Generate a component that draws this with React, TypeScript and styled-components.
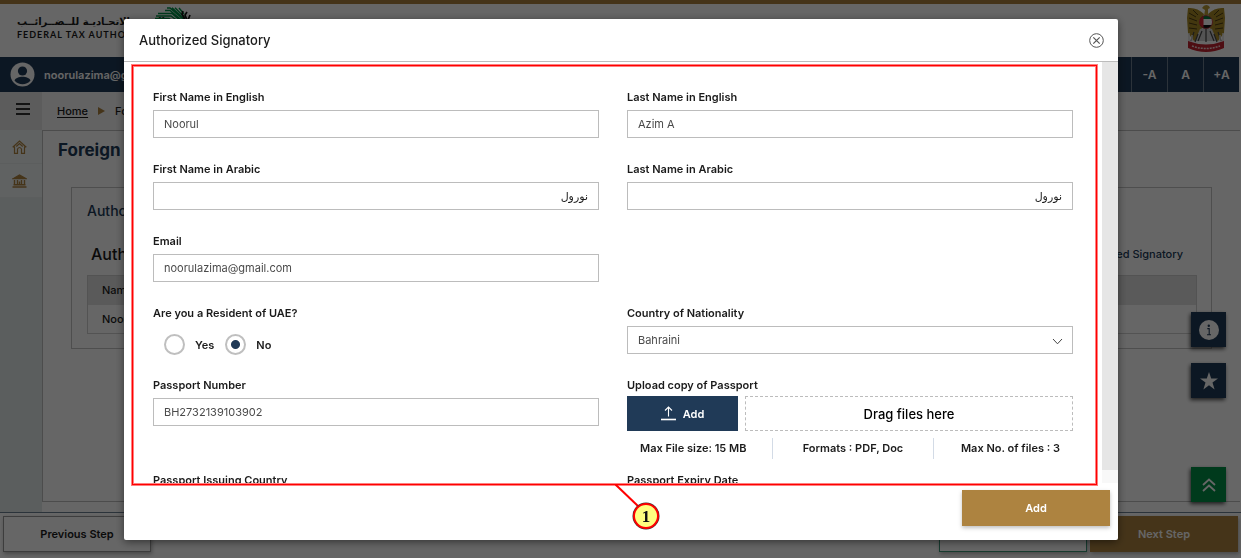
import React from "react";
import styled, { createGlobalStyle } from "styled-components";

const navy = "#203a57";
const gold = "#ad8340";
const sans = `Inter, "Noto Sans", "DejaVu Sans", sans-serif`;

const GlobalStyle = createGlobalStyle`
  *, *::before, *::after { box-sizing: border-box; }
  body { margin: 0; background: #fff; color: #1b1b1b; font: 500 11px/16px ${sans}; }
  button, input, select { font: inherit; color: inherit; margin: 0; }
  h1, h2, h3, p { margin: 0; }
`;

/* ---------- Page behind the dialog ---------- */

const Page = styled.div`
  min-height: 100vh;
  display: flex;
  flex-direction: column;
  border-top: 4px solid ${gold};
`;

const Masthead = styled.header`
  height: 53px;
  display: flex;
  justify-content: space-between;
  padding: 0 16px 0 17px;
`;

const Brand = styled.div`
  display: flex;
  padding-top: 3px;
`;

const BrandText = styled.div`
  width: 138px;
  padding-top: 8px;
`;

const BrandArabic = styled.p`
  width: max-content;
  direction: rtl;
  font: 700 10px/14px "DejaVu Sans", sans-serif;
  white-space: nowrap;
`;

const BrandEnglish = styled.p`
  font: 700 9px/12px Lato, sans-serif;
  letter-spacing: 1px;
  white-space: nowrap;
`;

const AccountBar = styled.div`
  height: 35px;
  display: flex;
  align-items: stretch;
  justify-content: space-between;
  margin-right: 2px;
  background: ${navy};
  color: #fff;
  font-weight: 600;
`;

const Account = styled.div`
  display: flex;
  align-items: center;
  gap: 9px;
  padding-left: 10px;
`;

const TextSizes = styled.div`
  display: flex;
`;

const TextSizeButton = styled.button`
  width: 36px;
  padding: 0;
  border: 0;
  border-left: 1px solid #6f8192;
  background: none;
  font-size: 12px;
`;

const Crumbs = styled.nav`
  height: 38px;
  display: flex;
  align-items: center;
  background: #f7f7f7;
`;

const MenuButton = styled.button`
  width: 42px;
  height: 38px;
  padding: 0 0 0 4px;
  border: 0;
  background: #e6e6e6;
`;

const CrumbList = styled.div`
  display: flex;
  align-items: center;
  gap: 10px;
  padding-left: 15px;
`;

const CrumbLink = styled.a`
  color: inherit;
  text-underline-offset: 2px;
`;

const Workspace = styled.div`
  flex: 1;
  display: flex;
`;

const SideNav = styled.nav`
  width: 42px;
  background: #e4eaea;
`;

const SideLink = styled.a`
  height: 34px;
  display: flex;
  align-items: center;
  justify-content: center;
  padding-right: 4px;
  border-bottom: 1px solid #e6eaea;
  background: #f1f5f5;
`;

const Main = styled.main`
  flex: 1;
  margin: 0 1px 10px 0;
  padding: 9px 28px 0 15px;
  border: 1px solid #bdbdbd;
  border-width: 1px 0 1px 1px;
`;

const PageTitle = styled.h1`
  font: 700 17px/20px ${sans};
  color: ${navy};
`;

const Card = styled.section`
  margin: 27px 0 0 13px;
  padding: 14px 14px 14px 15px;
  border: 1px solid #c4c4c4;
`;

const CardTitle = styled.h2`
  font: 500 14px/18px ${sans};
  color: ${navy};
`;

const CardHead = styled.div`
  display: flex;
  align-items: center;
  justify-content: space-between;
  padding: 24px 14px 11px 4px;
`;

const CardHeading = styled.h3`
  font: 500 16px/20px ${sans};
`;

const CardLink = styled.a`
  color: ${navy};
  text-decoration: none;
`;

const Signatories = styled.table`
  width: 100%;
  border: 1px solid #d0d0d0;
  border-collapse: collapse;
  text-align: left;
  th, td { height: 29px; padding: 0 14px; font-weight: 500; }
  th { background: #e0e0e0; }
`;

const StepBar = styled.footer`
  display: flex;
  justify-content: space-between;
  padding: 3px 3px 6px;
  border-top: 1px solid #6d8192;
`;

const StepGroup = styled.div`
  display: flex;
  gap: 3px;
`;

const StepButton = styled.button<{ $kind?: "save" | "next" }>`
  width: 148px;
  height: 36px;
  padding: 0;
  border: 1px solid ${(p) => (p.$kind === "save" ? "#3a9477" : p.$kind === "next" ? gold : "#9a9a9a")};
  background: ${(p) => (p.$kind === "next" ? gold : "#fff")};
  color: ${(p) => (p.$kind === "next" ? "#fff" : "inherit")};
  box-shadow: 1px 2px 4px rgba(0, 0, 0, 0.3);
  font-weight: 600;
`;

const Floating = styled.div`
  position: fixed;
  right: 15px;
  top: 312px;
  bottom: 56px;
  display: flex;
  flex-direction: column;
  gap: 16px;
`;

const FloatButton = styled.button<{ $up?: boolean }>`
  width: 35px;
  height: 35px;
  display: grid;
  place-items: center;
  padding: 0;
  border: 0;
  margin-top: ${(p) => (p.$up ? "auto" : "0")};
  background: ${(p) => (p.$up ? "#009247" : navy)};
  box-shadow: -1px 2px 4px rgba(0, 0, 0, 0.7);
`;

/* ---------- Dialog ---------- */

const Backdrop = styled.div`
  position: fixed;
  inset: 0;
  display: flex;
  padding: 19px 123px 18px 124px;
  background: rgba(0, 0, 0, 0.6);
`;

const Dialog = styled.div`
  flex: 1;
  min-width: 0;
  display: flex;
  flex-direction: column;
  border-radius: 2px;
  background: #fff;
  box-shadow: 0 2px 8px rgba(0, 0, 0, 0.5);
`;

const DialogHead = styled.header`
  height: 43px;
  display: flex;
  align-items: center;
  justify-content: space-between;
  padding: 0 14px 0 15px;
  border-bottom: 1px solid #bcbcbc;
`;

const DialogTitle = styled.h2`
  font: 500 13px/18px ${sans};
`;

const CloseButton = styled.button`
  display: flex;
  padding: 0;
  border: 0;
  background: none;
`;

const DialogBody = styled.div`
  position: relative;
  flex: 1;
  min-height: 0;
  display: flex;
`;

const Form = styled.form`
  flex: 1;
  min-width: 0;
  display: grid;
  grid-template-columns: 1fr 1fr;
  align-content: start;
  column-gap: 28px;
  padding: 27px 29px 0 29px;
  overflow-y: auto;
  scrollbar-width: none;
`;

const Track = styled.div`
  width: 16px;
  padding-bottom: 13px;
  background: #f8f8f8;
`;

const Thumb = styled.div`
  height: 100%;
  background: #e6e6e6;
`;

const Field = styled.div<{ $alone?: boolean }>`
  min-height: 72px;
  grid-column: ${(p) => (p.$alone ? "1 / -1" : "auto")};
  width: ${(p) => (p.$alone ? "calc(50% - 14px)" : "auto")};
`;

const Label = styled.label`
  display: block;
  margin-bottom: 5px;
  font-weight: 600;
`;

const Control = styled.input`
  display: block;
  width: 100%;
  height: 28px;
  padding: 0 10px;
  border: 1px solid #bcbcbc;
  border-radius: 0;
  background: #fff;
  color: #4a4a4a;
  font-weight: 400;
  &[dir="rtl"] { color: #1b1b1b; font-family: "DejaVu Sans", sans-serif; }
`;

const SelectBox = styled.div`
  position: relative;
  svg { position: absolute; right: 10px; top: 12px; pointer-events: none; }
`;

const Select = styled(Control).attrs({ as: "select" })`
  appearance: none;
`;

const Choices = styled.fieldset`
  min-height: 72px;
  margin: 0;
  padding: 0;
  border: 0;
  legend { padding: 0; font-weight: 600; }
`;

const ChoiceRow = styled.div`
  display: flex;
  gap: 11px;
  padding: 13px 0 0 11px;
`;

const Choice = styled.label`
  display: flex;
  align-items: center;
  gap: 10px;
  font-weight: 600;
`;

const Radio = styled.input.attrs({ type: "radio" })`
  appearance: none;
  width: 21px;
  height: 21px;
  border: 2px solid #bfbfbf;
  border-radius: 50%;
  background: #fff;
  &:checked { background: radial-gradient(circle, ${navy} 4px, #fff 5px); }
`;

const UploadField = styled.div`
  padding-bottom: 13px;
`;

const UploadLabel = styled(Label)`
  margin-bottom: 3px;
`;

const UploadRow = styled.div`
  display: flex;
  gap: 7px;
  height: 35px;
`;

const UploadButton = styled.button`
  width: 111px;
  display: flex;
  align-items: center;
  justify-content: center;
  gap: 7px;
  padding: 0;
  border: 0;
  background: ${navy};
  color: #fff;
  font-weight: 600;
`;

const DropZone = styled.div`
  flex: 1;
  display: grid;
  place-items: center;
  border: 1px dashed #bcbcbc;
  font-size: 13px;
  font-weight: 500;
  color: #000;
`;

const UploadHints = styled.div`
  display: grid;
  grid-template-columns: 29fr 32fr 28fr;
  margin-top: 7px;
`;

const Hint = styled.span`
  height: 21px;
  line-height: 21px;
  text-align: center;
  font-weight: 600;
  border-left: 1px solid #d3dbe6;
  &:first-child { border: 0; padding-left: 13px; text-align: left; }
  &:last-child { padding-right: 13px; text-align: right; }
`;

const DialogFoot = styled.footer`
  display: flex;
  justify-content: flex-end;
  padding: 7px 8px 14px;
`;

const PrimaryButton = styled.button`
  width: 148px;
  height: 36px;
  padding: 0;
  border: 0;
  background: ${gold};
  color: #fff;
  font-weight: 600;
  box-shadow: 0 2px 4px rgba(0, 0, 0, 0.25);
`;

const Highlight = styled.div`
  position: absolute;
  inset: 3px 21px -2px 8px;
  border: 1px solid #f00;
  box-shadow: 0 0 0 1px rgba(255, 0, 0, 0.5), inset 0 0 0 1px rgba(255, 0, 0, 0.5);
  pointer-events: none;
`;

const Callout = styled.svg`
  position: absolute;
  top: 100%;
  left: 50%;
`;

/* ---------- Drawings ---------- */

const LeafMark = () => (
  <svg width="40" height="30" viewBox="0 0 40 30" fill="none" stroke="#009247" strokeWidth="1.4" aria-hidden="true">
    <path d="M12 1h3l14 12M10 3.500h5l12 10M3 6.500h14l8 7M1 9h15l8 6M0 11.500h14l8 6M17 .800l13 12M20 .800l10 10M24 1l5 6" />
    <path d="M28 4l-1 3 3 6M32 5l-2 3 2 5M35 8l-2 5" stroke="#111" strokeWidth="1.700" />
  </svg>
);

const Emblem = () => (
  <svg width="38" height="49" viewBox="0 0 38 49" aria-label="United Arab Emirates emblem">
    <path d="M15 4q3-5 7-2l1 2-2 1v6l-4 1 1-6z" fill="#b79a35" />
    <path d="M17 10Q10 3 1 4L0 14l1 15 6 8 8-3V16zM21 10q7-7 16-6l1 10-1 15-6 8-8-3V16z" fill="#a98b27" />
    <path d="M2 9l7 4M2 14l8 3M2 19l8 2M2 24l8 1M36 9l-7 4M36 14l-8 3M36 19l-8 2M36 24l-8 1M6 6l5 5M32 6l-5 5" stroke="#4b3c12" strokeWidth="1" />
    <path d="M13 25l6-2 6 2 5 12H8z" fill="#cfcfcf" />
    <path d="M15 27l-4 10M19 25v13M23 27l4 10M7 28l-3 9M11 30l-3 8M31 28l3 9M27 30l3 8" stroke="#444" strokeWidth="1.2" />
    <path d="M2 29v8M5 31v6M33 31v6M36 29v8" stroke="#ddd" strokeWidth="1.4" />
    <path d="M1 37q18 7 36 0v7q-18 8-36 0z" fill="#c32331" />
    <path d="M5 42q14 5 28 0" fill="none" stroke="#f3d5d5" strokeWidth="1.5" strokeDasharray="2 1" />
    <circle cx="19" cy="18" r="6.500" fill="#fff" />
    <path d="M13.200 15a6.500 6.500 0 0 1 11.600 0z" fill="#087a3d" />
    <path d="M13.200 21h11.600a6.500 6.500 0 0 1-11.600 0z" fill="#111" />
    <path d="M16.500 12v12a6.500 6.500 0 0 1 0-12z" fill="#d42332" />
    <circle cx="19" cy="18" r="6.500" fill="none" stroke="#b3222e" strokeWidth=".8" />
  </svg>
);

const UserIcon = () => (
  <svg width="25" height="25" viewBox="0 0 25 25" aria-hidden="true">
    <circle cx="12.500" cy="12.500" r="12" fill="#fff" />
    <circle cx="12.500" cy="9" r="4.600" fill={navy} />
    <path d="M4.500 18.500c2-5 14-5 16 0-4 5-12 5-16 0z" fill={navy} />
  </svg>
);

const MenuIcon = () => (
  <svg width="14" height="12" viewBox="0 0 14 12" stroke="#333" strokeWidth="2" aria-hidden="true">
    <path d="M0 1h14M0 6h14M0 11h14" />
  </svg>
);

const HomeIcon = () => (
  <svg width="15" height="14" viewBox="0 0 15 14" fill="none" stroke={gold} strokeWidth="1.2" aria-hidden="true">
    <path d="M.7 7.200 7.500 1l6.800 6.200M2.500 6.500v6.800h3V9q2-3 4 0v4.300h3V6.500M4.300 6.500l3.200-3 3.200 3" />
  </svg>
);

const BankIcon = () => (
  <svg width="15" height="14" viewBox="0 0 15 14" fill="none" stroke={gold} strokeWidth="1.400" aria-hidden="true">
    <path d="M1.500 4.500 7.500 1l6 3.500z" fill={gold} />
    <path d="M2.500 6v4.500M5.500 6v4.500M9.500 6v4.500M12.500 6v4.500M1.500 10.800h12M.5 13h14M7.500 7.500v3" />
  </svg>
);

const CloseIcon = () => (
  <svg width="15" height="15" viewBox="0 0 15 15" fill="none" stroke="#555" aria-hidden="true">
    <circle cx="7.500" cy="7.500" r="6.800" />
    <path d="M4.300 4.300l6.400 6.400M10.700 4.300l-6.400 6.400" strokeWidth="1.200" />
  </svg>
);

const ChevronIcon = () => (
  <svg width="11" height="8" viewBox="0 0 11 8" fill="none" stroke="#444" aria-hidden="true">
    <path d="M1 1 5.500 5.800 10 1" />
  </svg>
);

const UploadIcon = () => (
  <svg width="15" height="15" viewBox="0 0 15 15" fill="none" stroke="#fff" aria-hidden="true">
    <path d="M7.500 10.500V1M4 4.500 7.500 1 11 4.500" strokeWidth="1.100" />
    <path d="M0 13.500h15" strokeWidth="1.600" />
  </svg>
);

const InfoIcon = () => (
  <svg width="20" height="20" viewBox="0 0 20 20" aria-hidden="true">
    <circle cx="10" cy="10" r="10" fill="#fff" />
    <circle cx="9.800" cy="5.800" r="1.200" fill={navy} />
    <path d="M8.300 8.600h1.900v6M8 14.700h4" fill="none" stroke={navy} strokeWidth="1.100" />
  </svg>
);

const StarIcon = () => (
  <svg width="18" height="18" viewBox="0 0 18 18" fill="#fff" aria-hidden="true">
    <path d="M9 0l2.200 6.500H18l-5.500 4.100L14.600 17.500 9 13.300l-5.600 4.200 2.100-6.900L0 6.500h6.800z" />
  </svg>
);

const UpIcon = () => (
  <svg width="14" height="14" viewBox="0 0 14 14" fill="none" stroke="#fff" strokeWidth="1.800" aria-hidden="true">
    <path d="M1 7l6-5.500L13 7M1 13l6-5.500 6 5.500" />
  </svg>
);

interface TextFieldProps {
  id: string;
  label: string;
  value?: string;
  dir?: "rtl";
  alone?: boolean;
}

const TextField = ({ id, label, value, dir, alone }: TextFieldProps) => (
  <Field $alone={alone}>
    <Label htmlFor={id}>{label}</Label>
    <Control id={id} type="text" defaultValue={value} dir={dir} />
  </Field>
);

export default function App() {
  return (
    <>
      <GlobalStyle />
      <Page>
        <Masthead>
          <Brand>
            <BrandText>
              <BrandArabic lang="ar">الهيئـة الاتحـاديـة للــضــرائــب</BrandArabic>
              <BrandEnglish>FEDERAL TAX AUTHORITY</BrandEnglish>
            </BrandText>
            <LeafMark />
          </Brand>
          <Emblem />
        </Masthead>
        <AccountBar>
          <Account>
            <UserIcon />
            noorulazima@gmail.com
          </Account>
          <TextSizes>
            <TextSizeButton>-A</TextSizeButton>
            <TextSizeButton>A</TextSizeButton>
            <TextSizeButton>+A</TextSizeButton>
          </TextSizes>
        </AccountBar>
        <Crumbs>
          <MenuButton aria-label="Menu"><MenuIcon /></MenuButton>
          <CrumbList>
            <CrumbLink href="#home">Home</CrumbLink>
            <svg width="7" height="8" viewBox="0 0 7 8" fill={gold} aria-hidden="true"><path d="M0 0l7 4-7 4z" /></svg>
            <span>Foreign</span>
          </CrumbList>
        </Crumbs>
        <Workspace>
          <SideNav>
            <SideLink href="#dashboard" aria-label="Dashboard"><HomeIcon /></SideLink>
            <SideLink href="#authority" aria-label="Authority"><BankIcon /></SideLink>
          </SideNav>
          <Main>
            <PageTitle>Foreign</PageTitle>
            <Card>
              <CardTitle>Authorized Signatory</CardTitle>
              <CardHead>
                <CardHeading>Authorized Signatory</CardHeading>
                <CardLink href="#add">Add Authorized Signatory</CardLink>
              </CardHead>
              <Signatories>
                <thead><tr><th>Name</th></tr></thead>
                <tbody><tr><td>Noorul</td></tr></tbody>
              </Signatories>
            </Card>
          </Main>
        </Workspace>
        <StepBar>
          <StepButton>Previous Step</StepButton>
          <StepGroup>
            <StepButton $kind="save" aria-label="Save" />
            <StepButton $kind="next">Next Step</StepButton>
          </StepGroup>
        </StepBar>
      </Page>
      <Floating>
        <FloatButton aria-label="Information"><InfoIcon /></FloatButton>
        <FloatButton aria-label="Favourites"><StarIcon /></FloatButton>
        <FloatButton $up aria-label="Back to top"><UpIcon /></FloatButton>
      </Floating>

      <Backdrop>
        <Dialog role="dialog" aria-modal="true" aria-labelledby="dialog-title">
          <DialogHead>
            <DialogTitle id="dialog-title">Authorized Signatory</DialogTitle>
            <CloseButton aria-label="Close"><CloseIcon /></CloseButton>
          </DialogHead>
          <DialogBody>
            <Form>
              <TextField id="first-en" label="First Name in English" value="Noorul" />
              <TextField id="last-en" label="Last Name in English" value="Azim A" />
              <TextField id="first-ar" label="First Name in Arabic" value="نورول" dir="rtl" />
              <TextField id="last-ar" label="Last Name in Arabic" value="نورول" dir="rtl" />
              <TextField id="email" label="Email" value="noorulazima@gmail.com" alone />
              <Choices>
                <legend>Are you a Resident of UAE?</legend>
                <ChoiceRow>
                  <Choice><Radio name="resident" value="yes" />Yes</Choice>
                  <Choice><Radio name="resident" value="no" defaultChecked />No</Choice>
                </ChoiceRow>
              </Choices>
              <Field>
                <Label htmlFor="nationality">Country of Nationality</Label>
                <SelectBox>
                  <Select id="nationality"><option>Bahraini</option></Select>
                  <ChevronIcon />
                </SelectBox>
              </Field>
              <TextField id="passport" label="Passport Number" value="BH2732139103902" />
              <UploadField>
                <UploadLabel as="div">Upload copy of Passport</UploadLabel>
                <UploadRow>
                  <UploadButton type="button"><UploadIcon />Add</UploadButton>
                  <DropZone>Drag files here</DropZone>
                </UploadRow>
                <UploadHints>
                  <Hint>Max File size: 15 MB</Hint>
                  <Hint>Formats : PDF, Doc</Hint>
                  <Hint>Max No. of files : 3</Hint>
                </UploadHints>
              </UploadField>
              <TextField id="issuer" label="Passport Issuing Country" />
              <TextField id="expiry" label="Passport Expiry Date" />
            </Form>
            <Track><Thumb /></Track>
            <Highlight>
              <Callout width="50" height="48" viewBox="0 0 50 48">
                <path d="M0 0l24 23" stroke="#f00" strokeWidth="2" />
                <circle cx="31" cy="32" r="13.500" fill="#333" />
                <circle cx="31" cy="32" r="12" fill="#ffff80" stroke="#f00" strokeWidth="2" />
                <text x="31" y="38" textAnchor="middle" fontFamily="Liberation Serif, serif" fontSize="17" fontWeight="700" fill="#111">1</text>
              </Callout>
            </Highlight>
          </DialogBody>
          <DialogFoot>
            <PrimaryButton type="button">Add</PrimaryButton>
          </DialogFoot>
        </Dialog>
      </Backdrop>
    </>
  );
}
